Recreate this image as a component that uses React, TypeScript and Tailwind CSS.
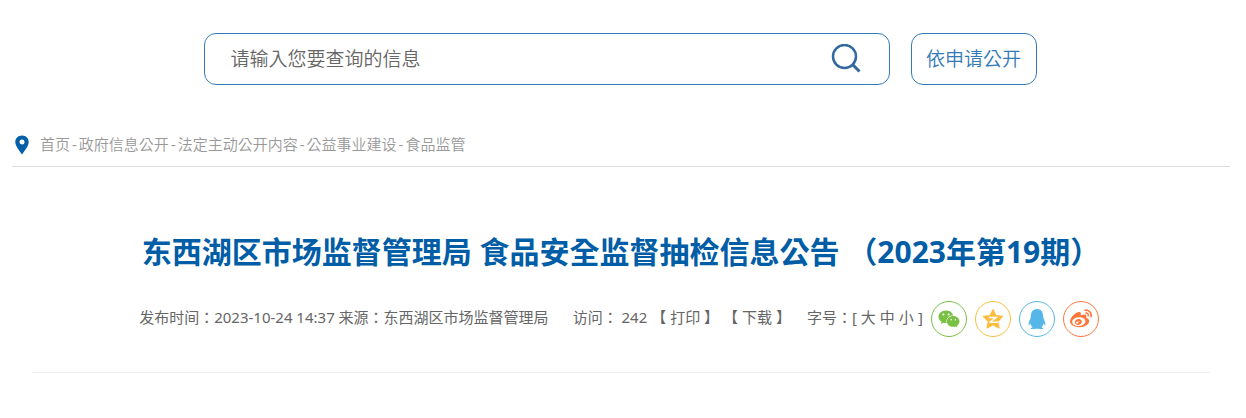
import React, { useState } from 'react';
import { FaQq, FaWeibo, FaWeixin } from 'react-icons/fa';

const crumbs = ['首页', '政府信息公开', '法定主动公开内容', '公益事业建设', '食品监管'];

const QzoneIcon = () => (
  <svg viewBox="0 0 24 24" className="w-[22px] h-[22px]" aria-hidden="true">
    <path
      fill="currentColor"
      stroke="currentColor"
      strokeWidth="1.5"
      strokeLinejoin="round"
      d="M12 2l3 6.500 7.300.8-5.300 5.200 1.500 7.200L12 18.200 5.500 21.700 7 14.500 1.700 9.300 9 8.500z"
    />
    <path fill="none" stroke="#fff" strokeWidth="1.600" d="M7.500 10.300h8l-6.500 5c2.500.5 5 .6 8.500 0" />
  </svg>
);

const shares = [
  { label: '微信', icon: <FaWeixin className="w-[22px] h-[22px]" />, color: 'border-[#7ac143] text-[#7ac143]' },
  { label: 'QQ空间', icon: <QzoneIcon />, color: 'border-[#fbbd3f] text-[#fbbd3f]' },
  { label: 'QQ', icon: <FaQq className="w-5 h-5" />, color: 'border-[#56b6e7] text-[#56b6e7]' },
  { label: '微博', icon: <FaWeibo className="w-[22px] h-[22px]" />, color: 'border-[#ff763b] text-[#ff763b]' },
];

const SearchBar = () => {
  const [query, setQuery] = useState('');

  return (
    <div className="flex justify-center gap-[21px] pr-0.5">
      <form
        className="flex items-center w-full max-w-[686px] h-[52px] pl-[26px] pr-7 border border-[#337ab7] rounded-xl"
        onSubmit={(e) => e.preventDefault()}
      >
        <input
          type="text"
          aria-label="查询信息"
          value={query}
          onChange={(e) => setQuery(e.target.value)}
          placeholder="请输入您要查询的信息"
          className="flex-1 min-w-0 text-[19px] font-[350] text-[#666] placeholder:text-[#666] focus:outline-none"
        />
        <button type="submit" aria-label="搜索" className="cursor-pointer text-[#33699f]">
          <svg viewBox="0 0 30 30" className="w-[30px] h-[30px]" fill="none" stroke="currentColor">
            <circle cx="13.500" cy="12.500" r="11.500" strokeWidth="2.500" />
            <path d="M21.500 20.500l7 7" strokeWidth="3" />
          </svg>
        </button>
      </form>
      <a
        href="#apply"
        className="flex items-center justify-center w-[126px] h-[52px] border border-[#337ab7] rounded-xl text-[19px] font-[350] text-[#337ab7] whitespace-nowrap"
      >
        依申请公开
      </a>
    </div>
  );
};

const Breadcrumb = () => (
  <nav className="flex items-center gap-[10px] h-11 px-px border-b border-[#ddd] text-[15px] font-[350] text-[#999]">
    <svg viewBox="0 0 16 20" className="w-4 h-5 ml-px shrink-0" aria-hidden="true">
      <path
        fill="#0360a8"
        fillRule="evenodd"
        d="M8 .5C4 .5 1.300 3.400 1.300 7c0 4 4 8.500 6.700 12.500C10.700 15.500 14.700 11 14.700 7 14.700 3.400 12 .5 8 .5zM8 4.500a2.500 2.500 0 110 5 2.500 2.500 0 010-5z"
      />
    </svg>
    <div className="flex gap-[2px] whitespace-nowrap">
      {crumbs.map((item, i) => (
        <React.Fragment key={item}>
          {i > 0 && <span className="font-normal">-</span>}
          <a href="#crumb">{item}</a>
        </React.Fragment>
      ))}
    </div>
  </nav>
);

const ArticleMeta = () => (
  <div className="flex items-center justify-center gap-2 pr-1 text-[15px] text-[#666] whitespace-nowrap">
    <div className="flex items-center pb-1">
      <span className="mr-6">发布时间：2023-10-24 14:37 来源：东西湖区市场监督管理局</span>
      <span className="mr-1">访问： 242</span>
      <button type="button" className="mr-1">【 打印 】</button>
      <button type="button" className="mr-4">【 下载 】</button>
      <span>字号：[</span>
      <div className="flex gap-1 px-1">
        <button type="button">大</button>
        <button type="button">中</button>
        <button type="button">小</button>
      </div>
      <span>]</span>
    </div>
    <div className="flex gap-2">
      {shares.map((item) => (
        <a
          key={item.label}
          href="#share"
          aria-label={item.label}
          className={`flex items-center justify-center w-9 h-9 border rounded-full ${item.color}`}
        >
          {item.icon}
        </a>
      ))}
    </div>
  </div>
);

const App: React.FC = () => {
  return (
    <div className="bg-white pl-3 pr-4 pt-[33px] font-['Noto_Sans','Noto_Sans_CJK_TC',sans-serif]" lang="zh-TW">
      <SearchBar />
      <div className="pt-[38px]">
        <Breadcrumb />
      </div>
      <article className="mx-5 pt-16 pb-[35px] border-b border-[#eee]">
        <h1 className="mb-7 text-center text-[30px] leading-[42px] font-bold text-[#005da6]">
          东西湖区市场监督管理局 食品安全监督抽检信息公告 （2023年第19期）
        </h1>
        <ArticleMeta />
      </article>
    </div>
  );
};

export default App;
